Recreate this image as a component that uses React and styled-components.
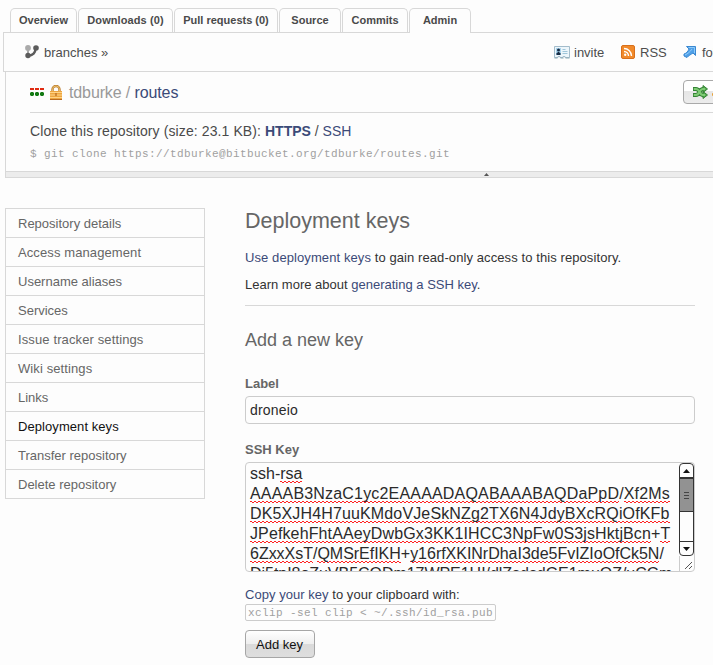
import React from "react";
import styled, { createGlobalStyle, css } from "styled-components";

const line = "#d8d8d8";
const link = "#3b4a78";

const GlobalStyle = createGlobalStyle`
  *, *::before, *::after { box-sizing: border-box; }
  body {
    margin: 0;
    background: #fdfdfd;
    color: #333;
    font-family: "Liberation Sans", Arial, sans-serif;
    font-size: 13px;
    overflow: hidden;
  }
`;

const Page = styled.div`
  width: 713px;
  height: 665px;
  overflow: hidden;
  white-space: nowrap;
`;

const Tabs = styled.nav`
  display: flex;
  gap: 1px;
  height: 33px;
  padding: 8px 0 0 10px;
`;

const Tab = styled.a`
  flex: none;
  width: ${(p) => p.$width}px;
  height: ${(p) => (p.$active ? 25 : 24)}px;
  border: 1px solid ${line};
  border-bottom: 0;
  border-radius: 5px 5px 0 0;
  background: #fdfdfd;
  font-size: 11px;
  font-weight: bold;
  line-height: 23px;
  text-align: center;
  letter-spacing: ${(p) => p.$spacing || 0}px;
  color: #4a4a4a;
  z-index: 1;
`;

const ActionBar = styled.div`
  display: flex;
  align-items: center;
  height: 40px;
  margin: -1px 0 0 3px;
  padding: 0 0 0 20px;
  border: solid ${line};
  border-width: 1px 0 1px 1px;
`;

const Action = styled.a`
  display: flex;
  align-items: center;
  flex: none;
  width: ${(p) => p.$width}px;
  gap: ${(p) => p.$gap || 4}px;
  color: #4d4d4d;
  svg { flex: none; }
`;

const Spacer = styled.div`
  flex: 1;
`;

const RepoPanel = styled.section`
  margin-left: 5px;
  height: 106px;
  border: solid ${line};
  border-width: 0 0 1px 1px;
`;

const RepoBody = styled.div`
  height: 99px;
  padding-left: 24px;
`;

const RepoTitle = styled.header`
  display: flex;
  align-items: center;
  gap: 4px;
  height: 41px;
  border-bottom: 1px solid ${line};
  color: #999;
  overflow: hidden;
  svg { flex: none; }
`;

const RepoName = styled.h1`
  margin: 0 0 0 2px;
  padding-top: 2px;
  font-size: 16px;
  font-weight: normal;
  line-height: 20px;
  letter-spacing: -0.12px;
`;

const Link = styled.a`
  color: ${link};
  font-weight: ${(p) => (p.$strong ? "bold" : "normal")};
`;

const ForkButton = styled.button`
  display: flex;
  align-items: center;
  flex: none;
  gap: 4px;
  width: 60px;
  height: 24px;
  margin: -1px -30px 0 0;
  padding: 0 0 0 8px;
  border: 1px solid #a9a9a9;
  border-radius: 4px;
  background: linear-gradient(#fff 0 45%, #e6e6e6 46%, #ececec);
`;

const CloneText = styled.p`
  margin: 9px 0 0;
  font-size: 14px;
  line-height: 18px;
  color: #4a4a4a;
`;

const CloneLabel = styled.span`
  letter-spacing: 0.1px;
`;

const monospace = css`
  font-family: "Liberation Mono", "Courier New", monospace;
  font-size: 11px;
  letter-spacing: 0.4px;
  color: #a0a0a0;
`;

const Command = styled.code`
  display: block;
  margin-top: 7px;
  line-height: 15px;
  ${monospace}
`;

const Collapse = styled.div`
  display: flex;
  align-items: center;
  height: 6px;
  padding-left: 478px;
  border-top: 1px solid ${line};
  background: #ececec;
`;

const Columns = styled.main`
  display: flex;
  gap: 40px;
  padding: 30px 0 0 5px;
`;

const Menu = styled.nav`
  width: 200px;
  flex: none;
  align-self: flex-start;
  border: 1px solid ${line};
`;

const MenuItem = styled.a`
  display: block;
  height: 29px;
  padding-left: 12px;
  line-height: 29px;
  color: ${(p) => (p.$active ? "#111" : "#666")};
  letter-spacing: ${(p) => p.$spacing || 0}px;
  border-bottom: 1px solid ${line};
  &:last-child { height: 28px; border-bottom: 0; }
`;

const Content = styled.section`
  width: 450px;
`;

const Title = styled.h2`
  margin: 0;
  font-size: 21.5px;
  line-height: 26px;
  font-weight: normal;
  color: #666;
`;

const Paragraph = styled.p`
  margin: ${(p) => p.$top}px 0 0;
  line-height: 15px;
  color: #333;
  letter-spacing: ${(p) => p.$spacing || 0}px;
`;

const Rule = styled.hr`
  margin: 13px 0 0;
  border: 0;
  border-top: 1px solid ${line};
`;

const Subtitle = styled.h3`
  margin: 23px 0 0;
  font-size: 18px;
  line-height: 22px;
  font-weight: normal;
  color: #666;
`;

const FieldLabel = styled.label`
  display: block;
  margin-top: ${(p) => p.$top}px;
  font-weight: bold;
  line-height: 15px;
  color: #666;
`;

const TextField = styled.div`
  height: 28px;
  margin-top: 5px;
  padding-left: 4px;
  border: 1px solid #ccc;
  border-radius: 4px;
  font-size: 14px;
  line-height: 26px;
  letter-spacing: 0.2px;
  color: #2a2a2a;
`;

const KeyField = styled.div`
  display: flex;
  justify-content: space-between;
  height: 110px;
  margin-top: 5px;
  padding-left: 4px;
  border: 1px solid #ccc;
  border-radius: 4px;
  overflow: hidden;
`;

const KeyText = styled.div`
  width: 428px;
  padding-top: 1px;
  font-size: 16px;
  line-height: 20px;
  color: #2a2a2a;
`;

const KeyLine = styled.div`
  height: 20px;
  letter-spacing: ${(p) => p.$spacing || 0}px;
`;

const Misspelled = styled.span`
  padding-bottom: 1px;
  background:
    repeating-linear-gradient(90deg, #f22 0 2px, transparent 2px 4px) 0 calc(100% - 1px) / 100% 1px no-repeat,
    repeating-linear-gradient(90deg, transparent 0 2px, #f22 2px 4px) 0 100% / 100% 1px no-repeat;
`;

const ScrollColumn = styled.div`
  display: flex;
  flex-direction: column;
  flex: none;
  width: 15px;
`;

const ScrollBar = styled.div`
  display: flex;
  flex-direction: column;
  height: 93px;
  border: 1px solid #333;
  border-radius: 4px;
  overflow: hidden;
`;

const ScrollArrow = styled.div`
  display: flex;
  align-items: center;
  justify-content: center;
  flex: none;
  height: 13px;
`;

const ScrollThumb = styled.div`
  display: flex;
  flex-direction: column;
  justify-content: center;
  align-items: center;
  gap: 2px;
  height: 35px;
  border: solid #333;
  border-width: 2px 0 1px;
  background: #929292;
`;

const GripLine = styled.i`
  width: 5px;
  height: 1px;
  background: #444;
`;

const ScrollTrack = styled.div`
  flex: 1;
  border-bottom: 1px solid #333;
`;

const ResizeCorner = styled.div`
  flex: 1;
  display: flex;
  justify-content: flex-end;
  align-items: flex-end;
  border-left: 1px solid #ccc;
`;

const Snippet = styled.code`
  display: block;
  width: 251px;
  height: 17px;
  margin-top: 2px;
  padding-left: 2px;
  border: 1px solid #ccc;
  border-radius: 2px;
  line-height: 17px;
  ${monospace}
`;

const AddButton = styled.button`
  display: block;
  width: 70px;
  height: 28px;
  margin-top: 9px;
  padding: 0 1px 0 0;
  border: 1px solid #a6a6a6;
  border-radius: 4px;
  background: linear-gradient(#fff, #eee 50%, #dadada 51%, #dedede);
  font-family: inherit;
  font-size: 13px;
  color: #111;
`;

const BranchIcon = () => (
  <svg width="16" height="16" viewBox="0 0 16 16">
    <path d="M4 4v6" stroke="#aaa" strokeWidth="2" />
    <path d="M4 11.500C9 11.500 11.500 9 11.500 4" fill="none" stroke="#5c5c5c" strokeWidth="2.400" />
    <circle cx="4" cy="4" r="2.900" fill="#aaa" />
    <circle cx="12" cy="4" r="2.800" fill="#5c5c5c" />
    <circle cx="4" cy="11.500" r="2.700" fill="#5c5c5c" />
  </svg>
);

const CardIcon = () => (
  <svg width="16" height="13" viewBox="0 0 16 13">
    <path d="M.5.5h15v11H11v-1H9v1H6v-1H4v1H.5z" fill="#edf6fb" stroke="#a3bccb" />
    <path d="M.5 12h3m3 0h3m2 0h4" stroke="#8cabb5" />
    <rect x="2" y="2" width="5" height="7" fill="#a8d3ec" />
    <circle cx="4.500" cy="4" r="1.500" fill="#182d46" />
    <path d="M2.500 9V7.500L4 6h1l1.500 1.500V9z" fill="#182d46" />
    <path d="M8.500 3.500h3m-3 2h5m-5 2h5" stroke="#9fc6da" />
  </svg>
);

const RssIcon = () => (
  <svg width="14" height="14" viewBox="0 0 14 14">
    <rect x=".5" y=".5" width="13" height="13" rx="1.500" fill="#f18a2b" stroke="#d8701c" />
    <circle cx="4.200" cy="9.800" r="1.200" fill="#fff" />
    <path d="M3 6.500a4.500 4.500 0 0 1 4.500 4.500M3 3.500a7.500 7.500 0 0 1 7.500 7.500" fill="none" stroke="#fff" strokeWidth="1.400" />
  </svg>
);

const FollowIcon = () => (
  <svg width="14" height="14" viewBox="0 0 14 14">
    <path d="M3.500 1.500H12.500V10.500L10 8C8 9.500 5.500 10.500 4 12.500L1 11V9C3 8.500 5 6.500 6 4z" fill="#4fa0e8" stroke="#3b88d0" />
    <path d="M5.500 2.500H11.500V8M2 10C5 8.500 7 7 9 4" fill="none" stroke="#8fcbfa" />
  </svg>
);

const LanguageIcon = () => (
  <svg width="15" height="9" viewBox="0 0 15 9">
    <path d="M0 1h4m1 0h4m1 0h4" stroke="#e02b12" strokeWidth="2" />
    <path d="M1 4h2l1 1v2L3 8H1L0 7V5zM6 4h2l1 1v2L8 8H6L5 7V5zM11 4h2l1 1v2l-1 1h-2l-1-1V5z" fill="#137a13" />
  </svg>
);

const LockIcon = () => (
  <svg width="14" height="15" viewBox="0 0 14 15">
    <path d="M3.500 7V4.500a3.500 3.500 0 0 1 7 0V7" fill="none" stroke="#bd7b2c" strokeWidth="2.400" />
    <path d="M3.500 7V4.500a3.500 3.500 0 0 1 7 0V7" fill="none" stroke="#f2d27c" strokeWidth=".8" />
    <rect x="1" y="6" width="12" height="8" fill="#eda640" />
    <path d="M1 7.500h12M1 10h12M1 12.500h12" stroke="#ffd387" />
    <path d="M1 14.500h12" stroke="#b86b22" />
    <path d="M7 8v3" stroke="#b4651c" strokeWidth="1.200" />
  </svg>
);

const ShuffleIcon = () => (
  <svg width="16" height="14" viewBox="0 0 16 14">
    <path d="M1 4h3c4 0 3 6 7 6h2M1 10h3c4 0 3-6 7-6h2" fill="none" stroke="#358335" strokeWidth="4" />
    <path d="M11 .5 15.500 4 11 7.500zM11 6.500l4.500 3.500-4.500 3.500z" fill="#56ad50" stroke="#358335" />
    <path d="M1.800 4h2.200c4 0 3 6 7 6h2M1.800 10H4c4 0 3-6 7-6h2" fill="none" stroke="#7fcb75" strokeWidth="2" />
  </svg>
);

const ForkIcon = () => (
  <svg width="12" height="12" viewBox="0 0 12 12">
    <path d="M0 8.500h4L9 3" fill="none" stroke="#e8a33b" strokeWidth="2.500" />
  </svg>
);

const Triangle = ({ down, width = 7, height = 4, color = "#111" }) => (
  <svg width={width} height={height} viewBox="0 0 8 4" preserveAspectRatio="none">
    <path d={down ? "M0 0h8L4 4z" : "M0 4h8L4 0z"} fill={color} />
  </svg>
);

const ResizeIcon = () => (
  <svg width="10" height="10" viewBox="0 0 10 10">
    <path d="M1 8 8 1M5 8l3-3" stroke="#555" />
  </svg>
);

const tabs = [
  { label: "Overview", width: 67 },
  { label: "Downloads (0)", width: 95, spacing: 0.1 },
  { label: "Pull requests (0)", width: 104 },
  { label: "Source", width: 62 },
  { label: "Commits", width: 66 },
  { label: "Admin", width: 62, active: true },
];

const menu = [
  { label: "Repository details" },
  { label: "Access management", spacing: 0.1 },
  { label: "Username aliases" },
  { label: "Services" },
  { label: "Issue tracker settings", spacing: 0.12 },
  { label: "Wiki settings", spacing: 0.1 },
  { label: "Links" },
  { label: "Deployment keys", spacing: 0.07, active: true },
  { label: "Transfer repository" },
  { label: "Delete repository" },
];

const keyLines = [
  { parts: ["ssh-", "*rsa"] },
  { parts: ["*AAAAB3NzaC1yc2EAAAADAQABAAABAQDaPpD", "/", "*Xf2Ms"], spacing: 0.18 },
  { parts: ["*DK5XJH4H7uuKMdoVJeSkNZg2TX6N4JdyBXcRQiOfKFb"], spacing: 0.14 },
  { parts: ["*JPefkehFhtAAeyDwbGx3KK1IHCC3NpFw0S3jsHktjBcn", "+", "*T"], spacing: 0.12 },
  { parts: ["*6ZxxXsT", "/", "*QMSrEfIKH", "+", "*y16rfXKINrDhaI3de5FvIZIoOfCk5N", "/"], spacing: -0.02 },
  { parts: ["*Dj5tpI8oZuVB5CQDm17WPE1HI", "/", "*dlZsdsdGE1muQZ", "/", "*uCGm"], spacing: -0.04 },
];

export default function App() {
  return (
    <Page>
      <GlobalStyle />
      <Tabs>
        {tabs.map((t) => (
          <Tab key={t.label} $width={t.width} $active={t.active} $spacing={t.spacing}>{t.label}</Tab>
        ))}
      </Tabs>
      <ActionBar>
        <Action $width={120}><BranchIcon />branches »</Action>
        <Spacer />
        <Action $width={67}><CardIcon />invite</Action>
        <Action $width={62} $gap={5}><RssIcon />RSS</Action>
        <Action $width={30} $gap={5}><FollowIcon />follow</Action>
      </ActionBar>
      <RepoPanel>
        <RepoBody>
          <RepoTitle>
            <LanguageIcon />
            <LockIcon />
            <RepoName>tdburke / <Link>routes</Link></RepoName>
            <Spacer />
            <ForkButton><ShuffleIcon /><ForkIcon /></ForkButton>
          </RepoTitle>
          <CloneText>
            <CloneLabel>Clone this repository (size: 23.1 KB): </CloneLabel>
            <Link $strong>HTTPS</Link> / <Link>SSH</Link>
          </CloneText>
          <Command>$ git clone https://tdburke@bitbucket.org/tdburke/routes.git</Command>
        </RepoBody>
        <Collapse><Triangle width={5} height={3} color="#555" /></Collapse>
      </RepoPanel>
      <Columns>
        <Menu>
          {menu.map((m) => (
            <MenuItem key={m.label} $active={m.active} $spacing={m.spacing}>{m.label}</MenuItem>
          ))}
        </Menu>
        <Content>
          <Title>Deployment keys</Title>
          <Paragraph $top={16} $spacing={0.09}>
            <Link>Use deployment keys</Link> to gain read-only access to this repository.
          </Paragraph>
          <Paragraph $top={12}>Learn more about <Link>generating a SSH key</Link>.</Paragraph>
          <Rule />
          <Subtitle>Add a new key</Subtitle>
          <FieldLabel $top={25}>Label</FieldLabel>
          <TextField>droneio</TextField>
          <FieldLabel $top={18}>SSH Key</FieldLabel>
          <KeyField>
            <KeyText>
              {keyLines.map(({ parts, spacing }, i) => (
                <KeyLine key={i} $spacing={spacing}>
                  {parts.map((p, j) =>
                    p[0] === "*" ? <Misspelled key={j}>{p.slice(1)}</Misspelled> : <span key={j}>{p}</span>
                  )}
                </KeyLine>
              ))}
            </KeyText>
            <ScrollColumn>
              <ScrollBar>
                <ScrollArrow><Triangle /></ScrollArrow>
                <ScrollThumb><GripLine /><GripLine /><GripLine /></ScrollThumb>
                <ScrollTrack />
                <ScrollArrow><Triangle down /></ScrollArrow>
              </ScrollBar>
              <ResizeCorner><ResizeIcon /></ResizeCorner>
            </ScrollColumn>
          </KeyField>
          <Paragraph $top={15} $spacing={0.04}>
            <Link>Copy your key</Link> to your clipboard with:
          </Paragraph>
          <Snippet>xclip -sel clip &lt; ~/.ssh/id_rsa.pub</Snippet>
          <AddButton>Add key</AddButton>
        </Content>
      </Columns>
    </Page>
  );
}
